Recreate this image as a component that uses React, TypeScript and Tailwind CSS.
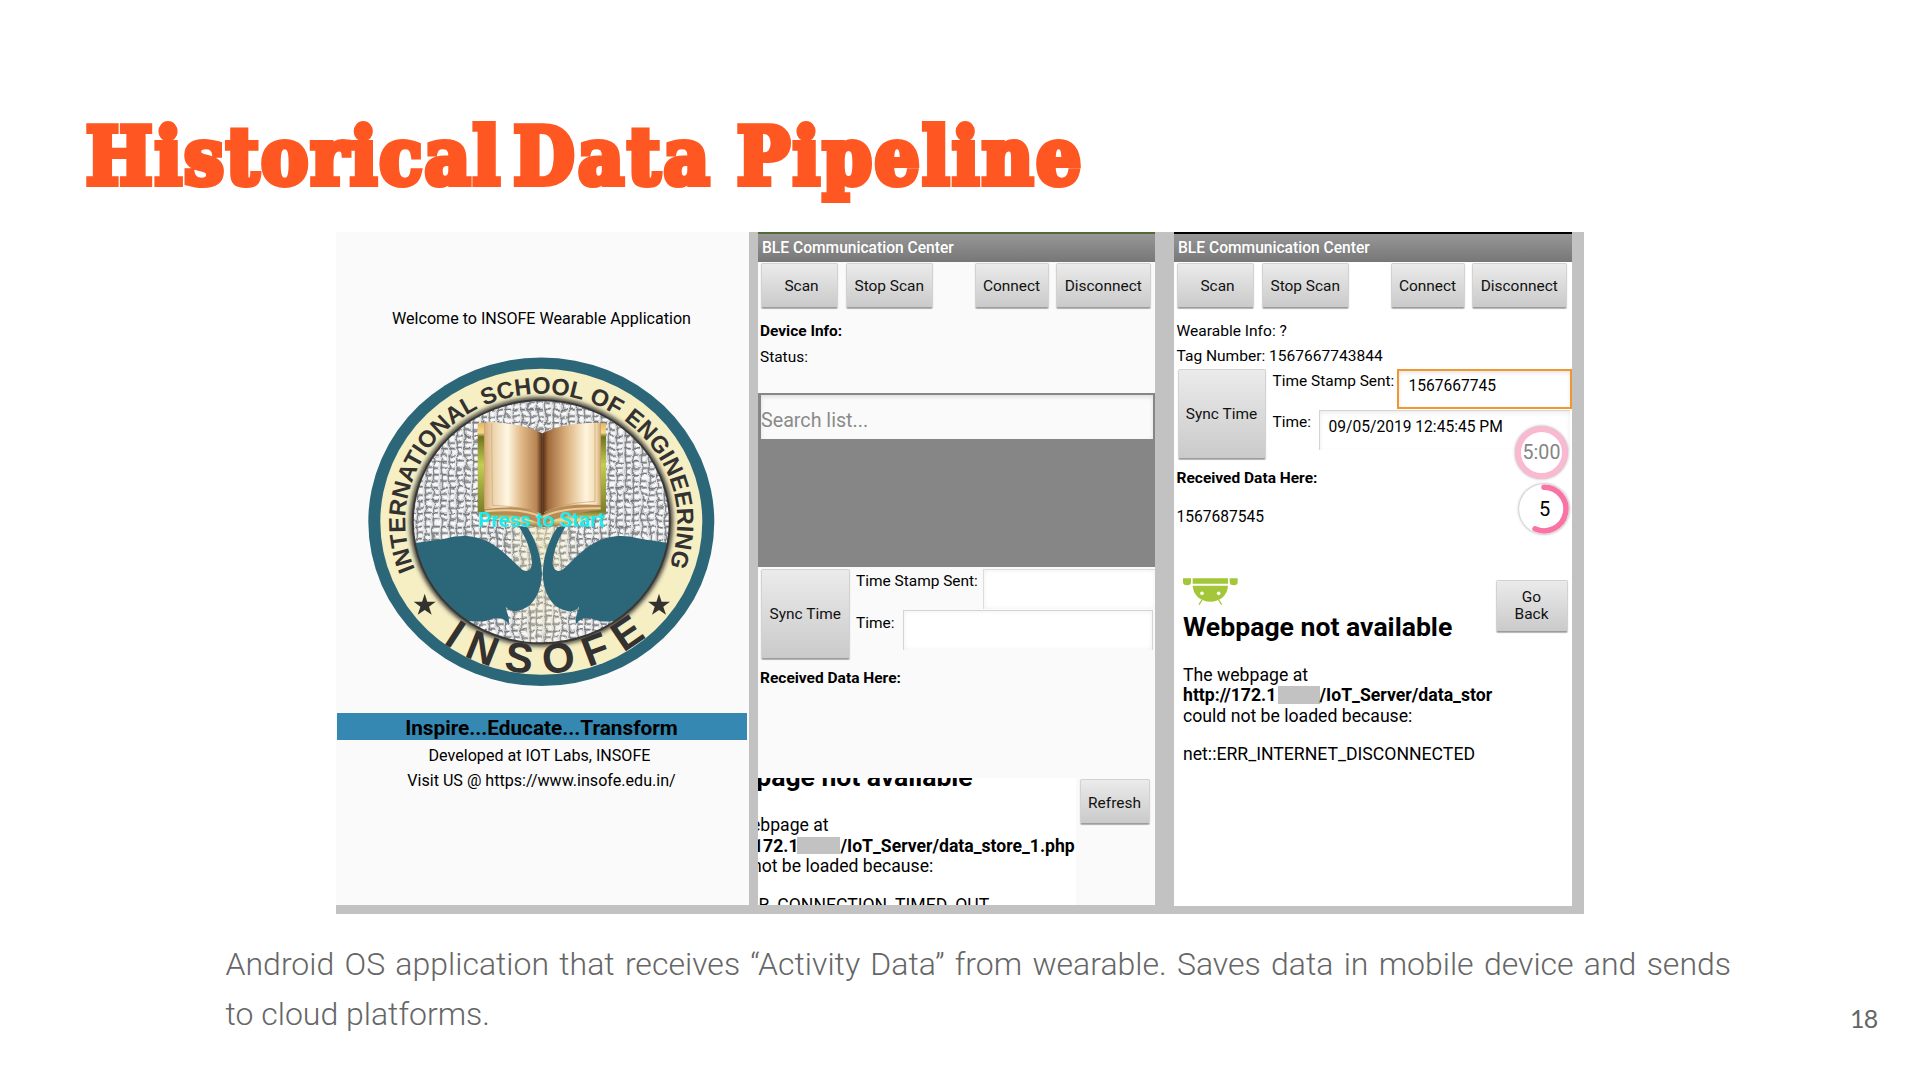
import type { ReactNode } from "react";

function Btn({ children, className }: { children: ReactNode; className: string }) {
  return (
    <button
      className={`flex shrink-0 items-center justify-center rounded-[2px] border border-[#d2d2d2] border-b-[#9c9c9c] bg-linear-to-b from-[#ebebeb] to-[#cacaca] text-center text-[15.45px] text-[#111] shadow-[0_1px_1px_rgba(0,0,0,0.3)] ${className}`}
    >
      {children}
    </button>
  );
}

function Header() {
  return (
    <div className="flex h-[28px] shrink-0 items-center bg-linear-to-b from-[#979797] to-[#777777] pl-[4px] text-[15.6px] font-medium text-white">
      BLE Communication Center
    </div>
  );
}

function Controls() {
  return (
    <div className="flex h-[45px] shrink-0 pl-[3px]">
      <Btn className="w-[77px] pl-[4px]">Scan</Btn>
      <Btn className="ml-[7.5px] w-[87.5px]">Stop Scan</Btn>
      <Btn className="ml-[41.5px] w-[74px]">Connect</Btn>
      <Btn className="ml-[7.5px] w-[94.5px]">Disconnect</Btn>
    </div>
  );
}

const HAND =
  "M250 760 L345 746 C400 732 440 738 480 758 C520 780 552 818 575 838 C590 848 604 842 606 820 C604 780 588 745 566 708 L592 712 C618 750 634 800 636 850 C634 905 612 950 570 961 C548 967 537 962 527 950 C529 968 540 978 536 1002 C524 988 512 980 488 986 C460 998 430 996 405 990 L250 960 Z";

const STAR = "M0 -11.5 L2.6 -3.6 L11 -3.6 L4.3 1.4 L7 9.5 L0 4.6 L-7 9.5 L-4.3 1.4 L-11 -3.6 L-2.6 -3.6 Z";

function Logo() {
  return (
    <svg width="347" height="330" viewBox="0 0 347 330" className="block">
      <defs>
        <pattern id="mesh" width="8" height="6.5" patternUnits="userSpaceOnUse" x="1">
          <rect width="8" height="6.5" fill="#bfc1c4" />
          <rect x="0" y="0" width="1.2" height="6.5" fill="#8b8d91" />
          <rect x="0" y="0" width="8" height="1.4" fill="#77797d" />
          <ellipse cx="4.2" cy="3.8" rx="3" ry="2" fill="#f8f8f9" />
          <rect x="5.8" y="0" width="1.4" height="6.5" fill="#e3e4e6" />
        </pattern>
        <filter id="weave" x="0" y="0" width="100%" height="100%">
          <feTurbulence type="fractalNoise" baseFrequency="0.09" numOctaves="2" seed="4" result="n" />
          <feDisplacementMap in="SourceGraphic" in2="n" scale="7" xChannelSelector="R" yChannelSelector="G" />
        </filter>
        <radialGradient id="warm">
          <stop offset="0" stopColor="#f3e9b4" stopOpacity="0.55" />
          <stop offset="1" stopColor="#f3e9b4" stopOpacity="0" />
        </radialGradient>
        <linearGradient id="pageL">
          <stop offset="0" stopColor="#d9ac77" />
          <stop offset="0.12" stopColor="#e9cfa6" />
          <stop offset="0.4" stopColor="#fff7e2" />
          <stop offset="0.62" stopColor="#e2bd8c" />
          <stop offset="0.9" stopColor="#b98453" />
          <stop offset="1" stopColor="#4e2c17" />
        </linearGradient>
        <linearGradient id="pageR">
          <stop offset="0" stopColor="#4e2c17" />
          <stop offset="0.1" stopColor="#a06a3d" />
          <stop offset="0.4" stopColor="#d9ae7b" />
          <stop offset="0.75" stopColor="#fff5dc" />
          <stop offset="0.92" stopColor="#f1dbb4" />
          <stop offset="1" stopColor="#d3a873" />
        </linearGradient>
        <linearGradient id="cover" x2="0" y2="1">
          <stop offset="0" stopColor="#e7b95a" />
          <stop offset="0.09" stopColor="#f4d88c" />
          <stop offset="0.13" stopColor="#6f7420" />
          <stop offset="0.4" stopColor="#c3cd52" />
          <stop offset="0.85" stopColor="#7b7f2a" />
          <stop offset="0.93" stopColor="#f0dd9a" />
          <stop offset="1" stopColor="#8a6a35" />
        </linearGradient>
        <clipPath id="inner">
          <ellipse cx="173.3" cy="164.8" rx="128.5" ry="121.5" />
        </clipPath>
        <filter id="soft" x="-10%" y="-10%" width="120%" height="120%">
          <feGaussianBlur stdDeviation="2.2" />
        </filter>
        <path id="top" d="M48.1 215 A136 128 0 1 1 298.5 215" />
        <path id="bottom" d="M75 286 A162 152 0 0 0 288 271" />
      </defs>
      <ellipse cx="173.3" cy="164.8" rx="173" ry="164.3" fill="#2c6779" />
      <ellipse cx="173.3" cy="164.8" rx="161" ry="153" fill="#f6efc4" />
      <ellipse cx="173.3" cy="164.8" rx="129" ry="122" fill="none" stroke="#333" strokeWidth="5" filter="url(#soft)" />
      <g clipPath="url(#inner)">
        <rect x="30" y="30" width="290" height="270" fill="url(#mesh)" filter="url(#weave)" />
        <ellipse cx="173.3" cy="190" rx="40" ry="130" fill="url(#warm)" />
        <g transform="translate(-38 -67) scale(.33333)">
          <path d={HAND} fill="#2c6779" />
          <path d={HAND} fill="#2c6779" transform="translate(1274 0) scale(-1 1)" />
        </g>
      </g>
      <ellipse cx="173.3" cy="164.8" rx="128.5" ry="121.5" fill="none" stroke="#3a3836" strokeWidth="2" />
      <g transform="translate(-38 -67) scale(.33333)">
        <path
          d="M443 400 L466 400 L637 440 L806 400 L828 400 L828 668 Q740 705 637 712 Q540 705 443 672 Z"
          fill="url(#cover)"
        />
        <path d="M463 400 L637 440 L812 400 L812 660 Q700 672 637 704 Q570 668 463 670 Z" fill="#b88a55" />
        <path d="M463 402 Q470 392 488 396 Q590 402 637 430 L637 676 Q600 640 463 658 Z" fill="url(#pageL)" />
        <path d="M637 430 Q700 396 812 398 L812 645 Q690 636 637 676 Z" fill="url(#pageR)" />
        <path d="M485 400 L487 646 Q590 650 633 672" fill="none" stroke="#c9a070" strokeWidth="2" />
        <path d="M795 400 L795 634 Q690 640 642 668" fill="none" stroke="#c9a070" strokeWidth="2" />
        <path d="M466 664 Q580 652 637 682 Q690 652 812 655" fill="none" stroke="#e9cb96" strokeWidth="6" />
      </g>
      <g fill="#343230" fontFamily="Liberation Sans, sans-serif" fontWeight="700">
        <text fontSize="23.5" textLength="508">
          <textPath href="#top" startOffset="3">INTERNATIONAL SCHOOL OF ENGINEERING</textPath>
        </text>
        <text fontSize="42" textLength="218">
          <textPath href="#bottom" startOffset="0">INSOFE</textPath>
        </text>
      </g>
      <path transform="translate(56.7 248.3)" d={STAR} fill="#343230" />
      <path transform="translate(291 248.3)" d={STAR} fill="#343230" />
    </svg>
  );
}

function Android() {
  return (
    <svg width="56" height="28" viewBox="0 0 168 84" className="block" fill="#a4c639">
      <path d="M0 1 H24 V12 A12 10 0 0 1 0 12 Z" />
      <path d="M140 1 H164 V12 A12 10 0 0 1 140 12 Z" />
      <path d="M29 1 H135 V17 H29 Z" />
      <path d="M29 23 H135 C134 52 110 71 82 71 C54 71 30 52 29 23 Z" />
      <path d="M57 66 L48 80 M107 66 L116 80" stroke="#a4c639" strokeWidth="4" />
      <circle cx="57" cy="46" r="5.5" fill="#fff" />
      <circle cx="107" cy="46" r="5.5" fill="#fff" />
    </svg>
  );
}

function WelcomeScreen() {
  return (
    <section className="flex h-[672.5px] w-[413px] shrink-0 flex-col bg-[#fafafa] text-center text-[16.1px] leading-5 text-black">
      <p className="mt-[77px] pr-[2px] text-[16.1px]">Welcome to INSOFE Wearable Application</p>
      <div className="relative mt-[28px] ml-8 h-[330px] w-[347px]">
        <Logo />
        <p className="absolute top-[151px] left-0 w-full text-center text-[20.6px] leading-6 font-bold text-[#1fe9ea]">
          Press to Start
        </p>
      </div>
      <p className="mt-[26px] mr-[2px] ml-px h-[27px] bg-[#3488b2] pr-px text-[20.75px] leading-[30px] font-bold">
        Inspire...Educate...Transform
      </p>
      <p className="mt-[6px] pr-[6px]">Developed at IOT Labs, INSOFE</p>
      <p className="mt-[5px] pr-[2px]">Visit US @ https://www.insofe.edu.in/</p>
    </section>
  );
}

function ScanScreen() {
  return (
    <section className="ml-[9px] flex h-[673px] w-[397px] shrink-0 flex-col overflow-hidden bg-[#fafafa] text-[15.45px] leading-5 text-black">
      <div className="h-[2px] shrink-0 bg-[#4f6a33]" />
      <Header />
      <div className="h-px shrink-0" />
      <Controls />
      <p className="mt-[13px] pl-[2px] font-bold">Device Info:</p>
      <p className="mt-[6px] pl-[2px]">Status:</p>
      <div className="mt-[26px] h-[174px] shrink-0 bg-[#868686] pt-[2px] pr-[2.5px] pl-[3px]">
        <div className="h-[44px] bg-[#fafafa] pt-[4px] text-[19.7px] leading-[44px] text-[#8a8a8a] shadow-[inset_0_2px_4px_rgba(0,0,0,0.12)]">
          Search list...
        </div>
      </div>
      <div className="mt-[2px] flex shrink-0 pl-[3px]">
        <Btn className="h-[90px] w-[88.5px]">Sync Time</Btn>
        <div className="flex flex-1 flex-col pl-[6.5px]">
          <div className="flex h-[41px]">
            <p className="mt-[2px] w-[126.5px] shrink-0">Time Stamp Sent:</p>
            <div className="h-10 flex-1 border-t border-l border-[#dcdcdc] bg-white shadow-[inset_0_0_5px_rgba(0,0,0,0.07)]" />
          </div>
          <div className="flex">
            <p className="mt-[3px] w-[46.5px] shrink-0">Time:</p>
            <div className="mr-[2px] h-10 flex-1 border border-b-0 border-[#d4d4d4] bg-white shadow-[inset_0_0_5px_rgba(0,0,0,0.07)]" />
          </div>
        </div>
      </div>
      <p className="mt-[9px] pl-[2px] text-[15.5px] font-bold">Received Data Here:</p>
      <div className="mt-[90px] flex min-h-0 flex-1">
        <div className="w-[318px] overflow-hidden bg-white text-[17.6px] leading-[20.5px] whitespace-nowrap">
          <h2 className="-mt-[16px] -ml-[1.7px] text-[26.5px] leading-[30px] font-bold">page not available</h2>
          <p className="mt-[23px] -ml-[7px]">ebpage at</p>
          <p className="-ml-[5px] flex font-bold">
            <span className="w-[43.5px]">172.1</span>
            <span className="mt-px h-[17px] w-[43px] bg-[#c2c2c2]" />
            <span className="pl-[1px]">/IoT_Server/data_store_1.php</span>
          </p>
          <p className="-ml-[6px]">not be loaded because:</p>
          <p className="mt-[18px] pl-[0.5px]">R_CONNECTION_TIMED_OUT</p>
        </div>
        <Btn className="mt-px ml-[3.5px] h-[45px] w-[70px] pt-[2px]">Refresh</Btn>
      </div>
    </section>
  );
}

function DataScreen() {
  return (
    <section className="relative ml-[19px] flex h-[674px] w-[398px] shrink-0 flex-col overflow-hidden bg-white text-[15.45px] leading-5 text-black">
      <div className="h-[2px] shrink-0 bg-black" />
      <Header />
      <div className="h-px shrink-0" />
      <Controls />
      <p className="mt-[13px] pl-[2.5px] text-[15.55px]">Wearable Info: ?</p>
      <p className="mt-[5px] pl-[2.5px] text-[15.55px]">Tag Number: 1567667743844</p>
      <div className="mt-[3px] flex shrink-0 pl-[3.5px]">
        <Btn className="h-[90px] w-[88px]">Sync Time</Btn>
        <div className="flex flex-1 flex-col pl-[7px]">
          <div className="flex h-[41px]">
            <p className="mt-[2px] w-[124.5px] shrink-0">Time Stamp Sent:</p>
            <div className="h-10 flex-1 border-2 border-[#f0982f] bg-white pt-[5px] pl-[9.5px] text-[15.6px] shadow-[inset_0_2px_4px_rgba(0,0,0,0.1)]">
              1567667745
            </div>
          </div>
          <div className="flex">
            <p className="mt-[2px] w-[46.5px] shrink-0">Time:</p>
            <div className="mr-[2px] h-10 flex-1 border-t border-l border-[#d4d4d4] bg-white pt-[6px] pl-[8.5px] text-[15.6px] shadow-[inset_0_2px_5px_rgba(0,0,0,0.08)]">
              09/05/2019 12:45:45 PM
            </div>
          </div>
        </div>
      </div>
      <p className="mt-[9px] pl-[2.5px] text-[15.5px] font-bold">Received Data Here:</p>
      <p className="mt-[19px] pl-[2.5px] text-[15.6px]">1567687545</p>
      <div className="mt-[51px] flex items-start pl-[9px] whitespace-nowrap">
        <div className="w-[312.5px] overflow-hidden text-[17.65px] leading-[20.7px]">
          <Android />
          <h2 className="mt-[6px] text-[26.6px] leading-[30px] font-bold">Webpage not available</h2>
          <p className="mt-[22.5px]">The webpage at</p>
          <p className="flex font-bold">
            <span className="w-[94.5px]">http://172.1</span>
            <span className="mt-[0.5px] h-[18px] w-[42px] bg-[#c2c2c2]" />
            <span>/IoT_Server/data_stor</span>
          </p>
          <p>could not be loaded because:</p>
          <p className="mt-[17.5px]">net::ERR_INTERNET_DISCONNECTED</p>
        </div>
        <Btn className="mt-[1.5px] h-[52px] w-[72px] pt-px leading-[17.5px]">
          Go
          <br />
          Back
        </Btn>
      </div>
      <div className="absolute top-[193.5px] left-[341px] flex size-[53px] items-center justify-center rounded-full border-[6px] border-[#f9b9d0] bg-white pt-[2px] text-[19.6px] text-[#858585] shadow-[0_0_3px_rgba(0,0,0,0.35)]">
        5:00
      </div>
      <div className="absolute top-[251.5px] left-[345px] flex size-[50px] items-center justify-center rounded-full bg-white pl-px text-[20px] shadow-[0_0_3px_rgba(0,0,0,0.45)]">
        5
        <svg viewBox="0 0 50 50" className="absolute inset-0">
          <path d="M25 3.2 A21.8 21.8 0 1 1 16 44.8" fill="none" stroke="#f973a5" strokeWidth="5.5" strokeLinecap="round" />
        </svg>
      </div>
    </section>
  );
}

export default function App() {
  return (
    <main className="flex h-[1080px] w-[1920px] flex-col overflow-hidden bg-white font-['Roboto',sans-serif]">
      <h1 className="mt-[106.5px] ml-[86px] flex h-[125.5px] font-['DejaVu_Serif_Condensed','DejaVu_Serif',serif] text-[78px] leading-[100px] font-black text-[#ff5722] [-webkit-text-stroke:6px_#ff5722]">
        <span className="w-[427.5px] tracking-[2.6px]">Historical</span>
        <span className="w-[223.5px] tracking-[3.8px]">Data</span>
        <span className="tracking-[3.1px]">Pipeline</span>
      </h1>
      <div className="ml-[336px] flex h-[682px] w-[1248px] shrink-0 items-start bg-[#c2c2c2]">
        <WelcomeScreen />
        <ScanScreen />
        <DataScreen />
      </div>
      <div className="flex">
        <p className="mt-[25px] ml-[225.5px] w-[1505.5px] text-justify text-[32px] leading-[50px] font-light text-[#666]">
          Android OS application that receives “Activity Data” from wearable. Saves data in mobile device and sends{" "}
          <span className="whitespace-nowrap">to cloud</span> platforms.
        </p>
        <p className="mt-[90px] ml-[119px] font-['Lato'] text-[25px] leading-[28px] tracking-[-0.8px] text-[#666]">18</p>
      </div>
    </main>
  );
}
